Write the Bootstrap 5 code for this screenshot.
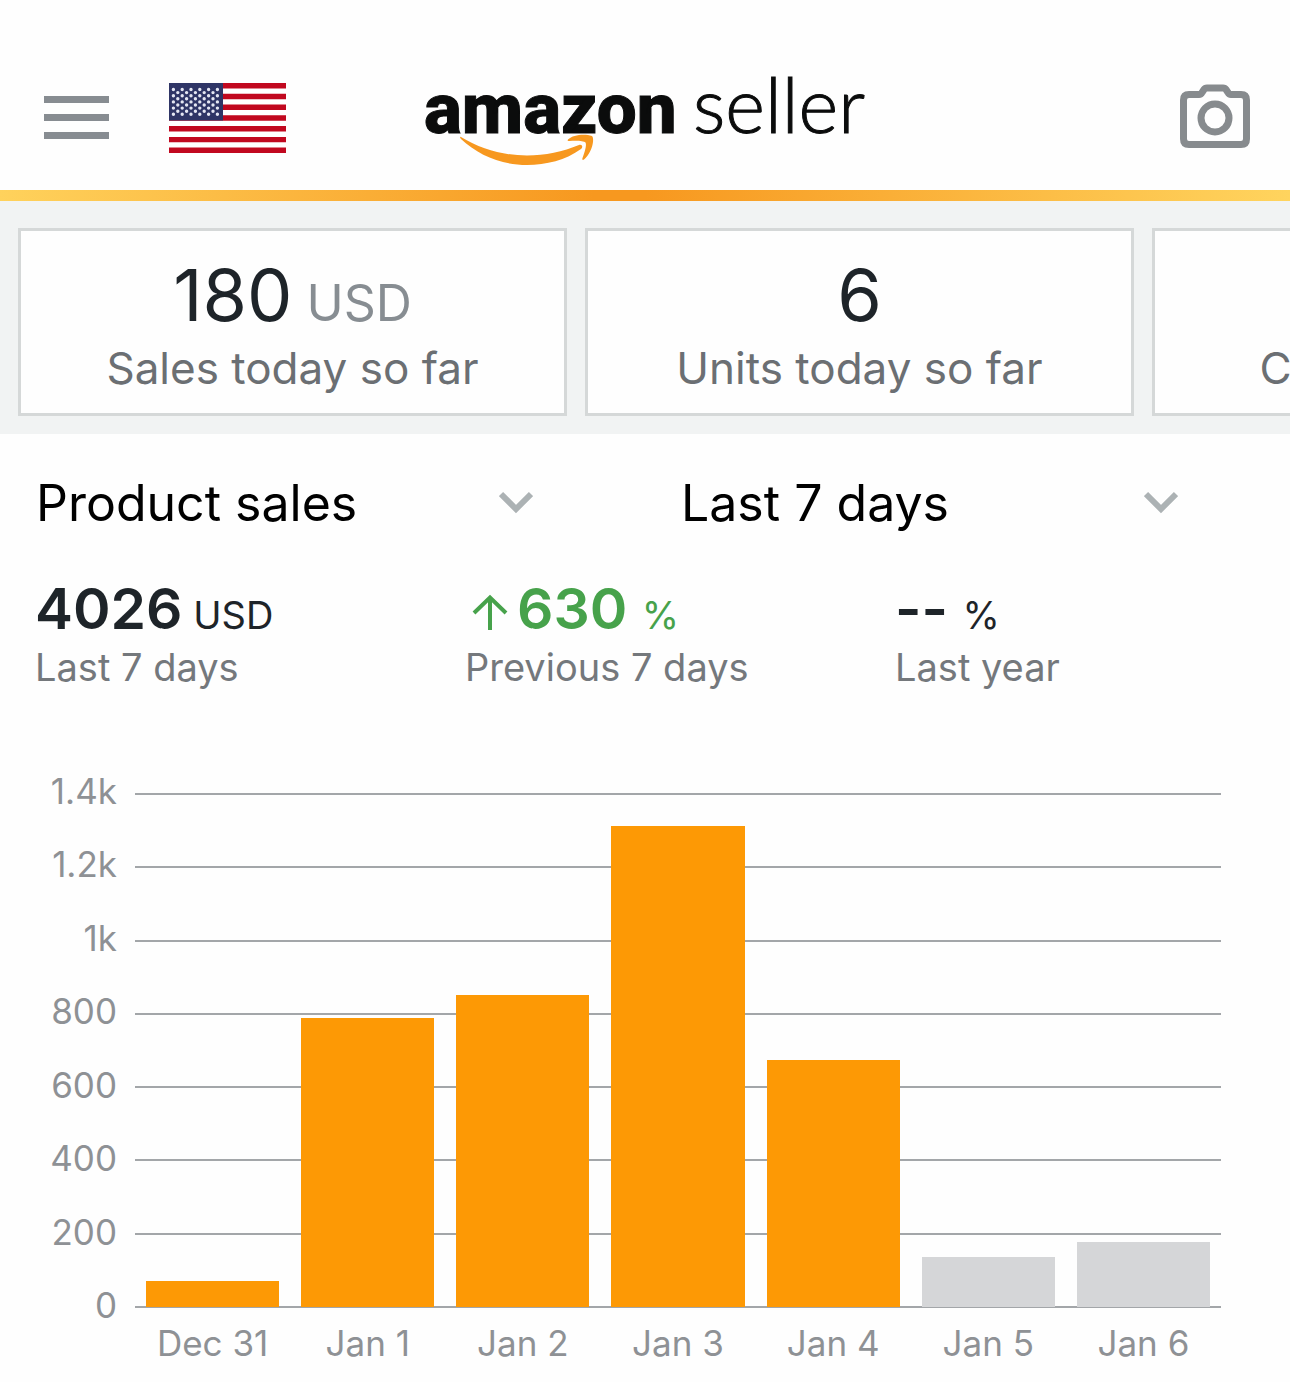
<!DOCTYPE html>
<html lang="en">
<head>
<meta charset="utf-8">
<meta name="viewport" content="width=device-width, initial-scale=1">
<title>Amazon Seller</title>
<link href="https://cdn.jsdelivr.net/npm/bootstrap@5.3.0/dist/css/bootstrap.min.css" rel="stylesheet">
<style>
  body { font-family: Inter, "Liberation Sans", sans-serif; background: #fefefe; color: #1e2429; overflow-x: hidden; }
  .topbar { padding: 46px 40px 0 44px; height: 190px; }
  .topbar-side { flex: 1 1 0; }
  .topbar svg, .picker svg, .delta svg { display: block; flex: none; }
  .flag-btn { margin-left: 60px; }
  .word-bold { font: 800 71px Roboto, sans-serif; stroke: #0b0c0c; stroke-width: 1; }
  .word-light { font: 300 76px Lato, sans-serif; stroke: #0b0c0c; stroke-width: 1; }
  .accent { height: 11px; background: linear-gradient(90deg, #ffd25c, #f7981f 46%, #f7981f 50%, #ffd45e); }
  .tiles { background: #f1f3f3; padding: 27px 18px 18px; gap: 18px; }
  .tile { flex: 0 0 calc((100% - 156px) / 2); border: 3px solid #d5d8d8; background: #fefefe; padding: 22px 0 14px; }
  .tile-value { font-size: 72px; line-height: 84px; }
  .tile-unit { font-size: 50px; line-height: 1; color: #878d92; }
  .tile-label { font-size: 44px; line-height: 62px; color: #6b6f73; }
  .picker { padding: 37px 112px 0 36px; }
  .picker select { appearance: none; border: 0; padding: 0; background: none; color: #000; font-size: 50px; line-height: 64px; min-width: 0; }
  .stats { padding: 38px 0 0; }
  .stat { padding-left: 35px; }
  .stat-value { font-size: 57px; line-height: 72px; font-weight: 600; }
  .stat-unit { font-size: 38px; line-height: 1; font-weight: 400; }
  .stat-label { font-size: 38px; line-height: 44px; color: #74787c; }
  .up { color: #47a24b; }
  .chart { padding: 104px 69px 0 36px; color: #8e9195; font-size: 35px; line-height: 40px; }
  .y-axis { width: 81px; margin: -22px 18px -17px 0; }
  .plot { display: grid; height: 515px; }
  .plot > div { grid-area: 1 / 1; }
  .grid-line { height: 2px; background: #a3a6a9; }
  .bars { padding-bottom: 1px; }
  .slot { flex: 1 1 0; min-width: 0; padding: 0 11px; }
  .bar { background: #fd9905; }
  .bar.pending { background: #d5d6d8; }
  .x-axis { padding: 15px 0 14px 99px; }
</style>
<script src="https://cdn.jsdelivr.net/npm/bootstrap@5.3.0/dist/js/bootstrap.bundle.min.js"></script>
</head>
<body>
<header class="topbar d-flex align-items-center">
  <div class="topbar-side d-flex align-items-center">
    <button class="btn p-0 border-0" aria-label="Menu">
      <svg width="65" height="47" viewBox="0 0 65 47" fill="#878c91"><path d="M0 1h65v7H0zM0 19h65v7H0zM0 37h65v7H0z"/></svg>
    </button>
    <button class="btn p-0 border-0 flag-btn" aria-label="Marketplace: United States">
      <svg width="117" height="70" viewBox="0 0 117 70">
        <path fill="#fff" d="M0 0h117v70H0z"/>
        <path stroke="#c1081f" stroke-width="5.4" d="M0 2.7h117M0 13.5h117M0 24.2h117M0 35h117M0 45.8h117M0 56.6h117M0 67.3h117"/>
        <path fill="#2f3566" d="M0 0h54v37.5H0z"/>
        <g stroke="#e4e6f2" stroke-width="3.4" stroke-linecap="round" stroke-dasharray="0 8.8">
          <path d="M4.4 6.5h45M4.4 12.7h45M4.4 18.9h45M4.4 25.1h45M4.4 31.3h45"/>
          <path d="M8.8 9.6h36M8.8 15.8h36M8.8 22h36M8.8 28.2h36"/>
        </g>
      </svg>
    </button>
  </div>
  <a href="#" aria-label="amazon seller home">
    <svg width="444" height="96" viewBox="0 0 444 96">
      <text class="word-bold" x="-1" y="63" fill="#0b0c0c">amazon</text>
      <text class="word-light" x="268" y="63" fill="#0b0c0c">seller</text>
      <path fill="#f7981f" d="M36 67c20 12 42 18.500 66 18.500 18 0 36-4 52-10.500 3-1 4.500 2 2 4-15 11-35 16-54 16-26 0-49-10-66-26-1.500-1.500-1-2.500 0-2z"/>
      <path fill="#f7981f" d="M143 69.500c5-5 17-6 24-3.500 3 3 0 17-8 23.500-1.500 1-2 0-1.500-1.500 2-5 4.500-13 3-15.500-2-2-10-2-16-1.500-1.500 0-2.500-.500-1.500-1.500z"/>
    </svg>
  </a>
  <div class="topbar-side d-flex justify-content-end">
    <button class="btn p-0 border-0" aria-label="Camera">
      <svg width="70" height="68" viewBox="0 0 70 68" fill="none" stroke="#878b8e" stroke-width="7">
        <path d="M9 10.500h10q2 0 3-2l2-3q1-1.500 3-1.500h16q2 0 3 1.500l2 3q1 2 3 2h10q5.500 0 5.500 5.500v39q0 5.500-5.500 5.500H9q-5.500 0-5.500-5.500V16q0-5.500 5.500-5.500z"/>
        <circle cx="35" cy="34" r="14"/>
      </svg>
    </button>
  </div>
</header>
<div class="accent"></div>

<section class="tiles d-flex overflow-hidden">
  <div class="tile text-center">
    <div class="tile-value">180<span class="tile-unit"> USD</span></div>
    <div class="tile-label">Sales today so far</div>
  </div>
  <div class="tile text-center">
    <div class="tile-value">6</div>
    <div class="tile-label">Units today so far</div>
  </div>
  <div class="tile text-center">
    <div class="tile-value">0</div>
    <div class="tile-label">Current balance</div>
  </div>
</section>

<main>
  <div class="row g-0">
    <div class="col-6 picker d-flex align-items-center">
      <select class="flex-grow-1" aria-label="Metric"><option>Product sales</option></select>
      <svg width="34" height="24" viewBox="0 0 34 24" fill="none" stroke="#acb2b4" stroke-width="6"><path d="M2 3l15 15L32 3"/></svg>
    </div>
    <div class="col-6 picker d-flex align-items-center">
      <select class="flex-grow-1" aria-label="Period"><option>Last 7 days</option></select>
      <svg width="34" height="24" viewBox="0 0 34 24" fill="none" stroke="#acb2b4" stroke-width="6"><path d="M2 3l15 15L32 3"/></svg>
    </div>
  </div>

  <div class="row g-0 stats">
    <div class="col-4 stat">
      <div class="stat-value">4026<span class="stat-unit"> USD</span></div>
      <div class="stat-label">Last 7 days</div>
    </div>
    <div class="col-4 stat">
      <div class="stat-value up delta d-flex align-items-center">
        <svg width="52" height="42" viewBox="0 0 52 42" fill="none" stroke="currentColor" stroke-width="4"><path d="M25 42V10M9 25L25 9.500 41 25"/></svg>
        <span>630 <span class="stat-unit">%</span></span>
      </div>
      <div class="stat-label">Previous 7 days</div>
    </div>
    <div class="col-4 stat">
      <div class="stat-value">-- <span class="stat-unit">%</span></div>
      <div class="stat-label">Last year</div>
    </div>
  </div>

  <section class="chart" aria-label="Product sales by day">
    <div class="d-flex">
      <div class="y-axis d-flex flex-column justify-content-between text-end">
        <span>1.4k</span><span>1.2k</span><span>1k</span><span>800</span><span>600</span><span>400</span><span>200</span><span>0</span>
      </div>
      <div class="plot flex-grow-1">
        <div class="d-flex flex-column justify-content-between">
          <div class="grid-line"></div><div class="grid-line"></div><div class="grid-line"></div><div class="grid-line"></div>
          <div class="grid-line"></div><div class="grid-line"></div><div class="grid-line"></div><div class="grid-line"></div>
        </div>
        <div class="bars d-flex align-items-stretch">
          <div class="slot d-flex flex-column justify-content-end"><div class="bar" style="height:5.1%"></div></div>
          <div class="slot d-flex flex-column justify-content-end"><div class="bar" style="height:56.3%"></div></div>
          <div class="slot d-flex flex-column justify-content-end"><div class="bar" style="height:60.8%"></div></div>
          <div class="slot d-flex flex-column justify-content-end"><div class="bar" style="height:93.6%"></div></div>
          <div class="slot d-flex flex-column justify-content-end"><div class="bar" style="height:48.1%"></div></div>
          <div class="slot d-flex flex-column justify-content-end"><div class="bar pending" style="height:9.8%"></div></div>
          <div class="slot d-flex flex-column justify-content-end"><div class="bar pending" style="height:12.7%"></div></div>
        </div>
      </div>
    </div>
    <div class="x-axis d-flex text-center">
      <span class="slot px-0">Dec 31</span><span class="slot px-0">Jan 1</span><span class="slot px-0">Jan 2</span><span class="slot px-0">Jan 3</span><span class="slot px-0">Jan 4</span><span class="slot px-0">Jan 5</span><span class="slot px-0">Jan 6</span>
    </div>
  </section>
</main>
</body>
</html>
